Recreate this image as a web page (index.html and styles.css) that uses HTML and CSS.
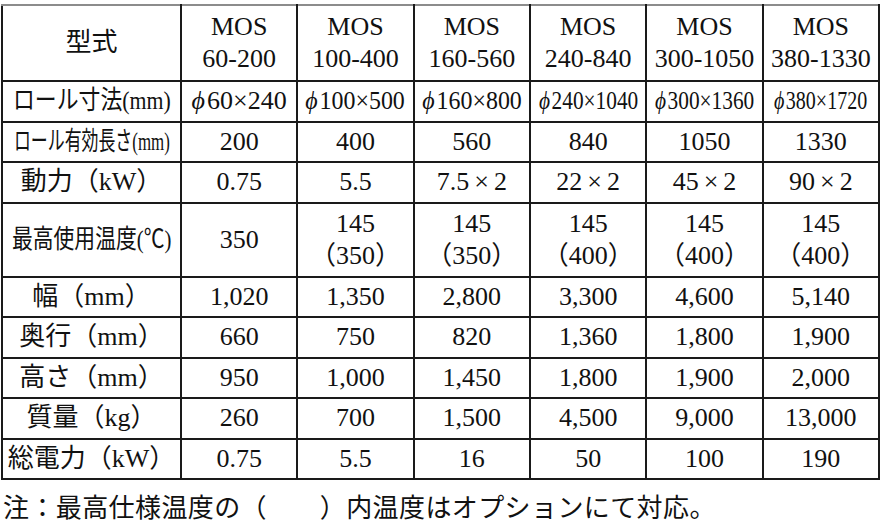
FILE: index.html
```html
<!DOCTYPE html>
<html>
    <head>
        <meta charset="utf-8">
        <title>MOS 仕様</title>
        <link rel="stylesheet" href="styles.css">
    </head>
    <body>
        <table class="spec">
            <colgroup>
                <col class="col-label">
                <col><col><col><col><col><col>
            </colgroup>
            <tr class="row-head">
                <td>型式</td>
                <td>MOS<br>60-200</td>
                <td>MOS<br>100-400</td>
                <td>MOS<br>160-560</td>
                <td>MOS<br>240-840</td>
                <td>MOS<br>300-1050</td>
                <td>MOS<br>380-1330</td>
            </tr>
            <tr class="row">
                <td><div class="fit"><span class="sq sq-84">ロール寸法(mm)</span></div></td>
                <td><div class="fit"><span class="sq"><i>ϕ</i>60×240</span></div></td>
                <td><div class="fit"><span class="sq sq-92"><i>ϕ</i>100×500</span></div></td>
                <td><div class="fit"><span class="sq sq-92"><i>ϕ</i>160×800</span></div></td>
                <td><div class="fit"><span class="sq sq-82"><i>ϕ</i>240×1040</span></div></td>
                <td><div class="fit"><span class="sq sq-82"><i>ϕ</i>300×1360</span></div></td>
                <td><div class="fit"><span class="sq sq-77"><i>ϕ</i>380×1720</span></div></td>
            </tr>
            <tr class="row">
                <td><div class="fit"><span class="sq sq-65">ロール有効長さ(mm)</span></div></td>
                <td>200</td>
                <td>400</td>
                <td>560</td>
                <td>840</td>
                <td>1050</td>
                <td>1330</td>
            </tr>
            <tr class="row">
                <td>動力（kW）</td>
                <td>0.75</td>
                <td>5.5</td>
                <td>7.5<span class="x">×</span>2</td>
                <td>22<span class="x">×</span>2</td>
                <td>45<span class="x">×</span>2</td>
                <td>90<span class="x">×</span>2</td>
            </tr>
            <tr class="row-double">
                <td><div class="fit"><span class="sq sq-80">最高使用温度(℃)</span></div></td>
                <td>350</td>
                <td>145<br>（350）</td>
                <td>145<br>（350）</td>
                <td>145<br>（400）</td>
                <td>145<br>（400）</td>
                <td>145<br>（400）</td>
            </tr>
            <tr class="row">
                <td>幅（mm）</td>
                <td>1,020</td>
                <td>1,350</td>
                <td>2,800</td>
                <td>3,300</td>
                <td>4,600</td>
                <td>5,140</td>
            </tr>
            <tr class="row">
                <td>奥行（mm）</td>
                <td>660</td>
                <td>750</td>
                <td>820</td>
                <td>1,360</td>
                <td>1,800</td>
                <td>1,900</td>
            </tr>
            <tr class="row">
                <td>高さ（mm）</td>
                <td>950</td>
                <td>1,000</td>
                <td>1,450</td>
                <td>1,800</td>
                <td>1,900</td>
                <td>2,000</td>
            </tr>
            <tr class="row">
                <td>質量（kg）</td>
                <td>260</td>
                <td>700</td>
                <td>1,500</td>
                <td>4,500</td>
                <td>9,000</td>
                <td>13,000</td>
            </tr>
            <tr class="row">
                <td>総電力（kW）</td>
                <td>0.75</td>
                <td>5.5</td>
                <td>16</td>
                <td>50</td>
                <td>100</td>
                <td>190</td>
            </tr>
        </table>
        <p class="note">注：最高仕様温度の（　　）内温度はオプションにて対応。</p>
    </body>
</html>
```

FILE: styles.css
```css
body {
    background-color: #fff;
    color: #111;
    font-family: "Liberation Serif", "Noto Sans CJK JP", serif;
    font-size: 26px;
    margin: 0;
    padding: 4px 0 0 1px;
}
table.spec {
    border-collapse: collapse;
    table-layout: fixed;
    width: 879px;
}
table.spec td {
    border: 2px solid #1a1a1a;
    padding: 0;
    vertical-align: middle;
    text-align: center;
    white-space: nowrap;
    line-height: 32px;
}
table.spec tr:first-child td {
    border-top-color: #8c8c8c;
}
col.col-label {
    width: 179px;
}
.row {
    height: 40.5px;
}
.row-head {
    height: 76px;
}
.row-head td {
    line-height: 33px;
}
.row-double {
    height: 74px;
}
.fit {
    display: flex;
    justify-content: center;
}
.sq {
    display: inline-block;
    transform-origin: center;
}
.sq i {
    padding-right: 2px;
}
.sq-92 { transform: scaleX(0.92); }
.sq-84 { transform: scaleX(0.84); }
.sq-82 { transform: scaleX(0.82); }
.sq-80 { transform: scaleX(0.80); }
.sq-77 { transform: scaleX(0.77); }
.sq-65 { transform: scaleX(0.65); }
.x {
    padding: 0 5px;
}
.note {
    margin: 11px 0 0 2px;
    line-height: 36px;
    letter-spacing: 0.4px;
}
```
